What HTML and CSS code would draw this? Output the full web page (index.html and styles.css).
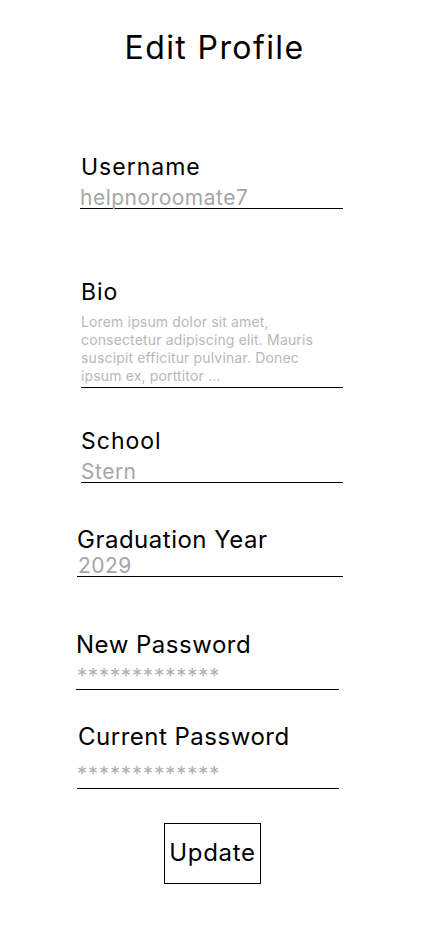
FILE: index.html
```html
<!DOCTYPE html>
<html lang="en">
<head>
<meta charset="utf-8">
<title>Edit Profile</title>
<link rel="stylesheet" href="styles.css">
</head>
<body>
<main class="page">
  <h1 class="title">Edit Profile</h1>

  <div class="field f-user">
    <div class="label">Username</div>
    <div class="value">helpnoroomate7</div>
  </div>

  <div class="field f-bio">
    <div class="label">Bio</div>
    <div class="value bio">Lorem ipsum dolor sit amet, consectetur adipiscing elit. Mauris suscipit efficitur pulvinar. Donec ipsum ex, porttitor ...</div>
  </div>

  <div class="field f-school">
    <div class="label">School</div>
    <div class="value">Stern</div>
  </div>

  <div class="field f-grad">
    <div class="label big">Graduation Year</div>
    <div class="value">2029</div>
  </div>

  <div class="field f-newpw">
    <div class="label big">New Password</div>
    <div class="value pw">*************</div>
  </div>

  <div class="field f-curpw">
    <div class="label big">Current Password</div>
    <div class="value pw pw2">*************</div>
  </div>

  <button class="update" type="button">Update</button>
</main>
</body>
</html>
```

FILE: styles.css
```css
* { box-sizing: border-box; }
html, body { margin: 0; padding: 0; background: #ffffff; }
body {
  font-family: Inter, "Noto Sans", "Liberation Sans", sans-serif;
  color: #000000;
  width: 428px;
}
.page {
  display: flex;
  flex-direction: column;
  align-items: flex-start;
  padding-top: 28px;
}
.title {
  align-self: stretch;
  margin: 0 0 -1px 1px;
  text-align: center;
  font-size: 32px;
  font-weight: 400;
  line-height: 40px;
  letter-spacing: 1.4px;
}
.field {
  display: flex;
  flex-direction: column;
}
.label {
  font-size: 23px;
  line-height: 26px;
  letter-spacing: 1px;
}
.label.big {
  font-size: 24px;
  line-height: 29px;
  letter-spacing: 0.5px;
}
.value {
  margin-top: 8px;
  font-size: 21px;
  line-height: 20px;
  letter-spacing: 0.5px;
  color: #a6a6a6;
  border-bottom: 1px solid #000000;
}
.value.bio {
  font-size: 14px;
  line-height: 18px;
  letter-spacing: 0.15px;
  color: #b8b8b8;
  padding-bottom: 2px;
}
.value.pw {
  margin-top: 7px;
  padding-bottom: 3px;
  font-size: 20px;
  letter-spacing: 1px;
  color: #b0b0b0;
}
.value.pw2 {
  margin-top: 12px;
  padding-bottom: 4px;
}
.f-user { margin: 87px 0 0 81px; width: 262px; }
.f-user .value { margin-left: -1px; }
.f-bio { margin: 70px 0 0 81px; width: 262px; }
.f-school { margin: 40px 0 0 81px; width: 262px; }
.f-grad { margin: 42px 0 0 77px; width: 266px; }
.f-grad .value { margin-top: 2px; padding-left: 1px; }
.f-newpw { margin: 53px 0 0 76px; width: 263px; }
.f-newpw .value { padding-left: 1px; }
.f-curpw { margin: 33px 0 0 77px; width: 262px; }
.f-curpw .label { padding-left: 1px; margin-top: -1px; margin-bottom: 1px; }
.update {
  margin: 34px 0 0 164px;
  width: 97px;
  height: 61px;
  padding: 0 0 2px;
  background: #ffffff;
  border: 1px solid #000000;
  border-radius: 0;
  font-family: inherit;
  font-size: 24px;
  letter-spacing: 0.7px;
  color: #000000;
}
```
